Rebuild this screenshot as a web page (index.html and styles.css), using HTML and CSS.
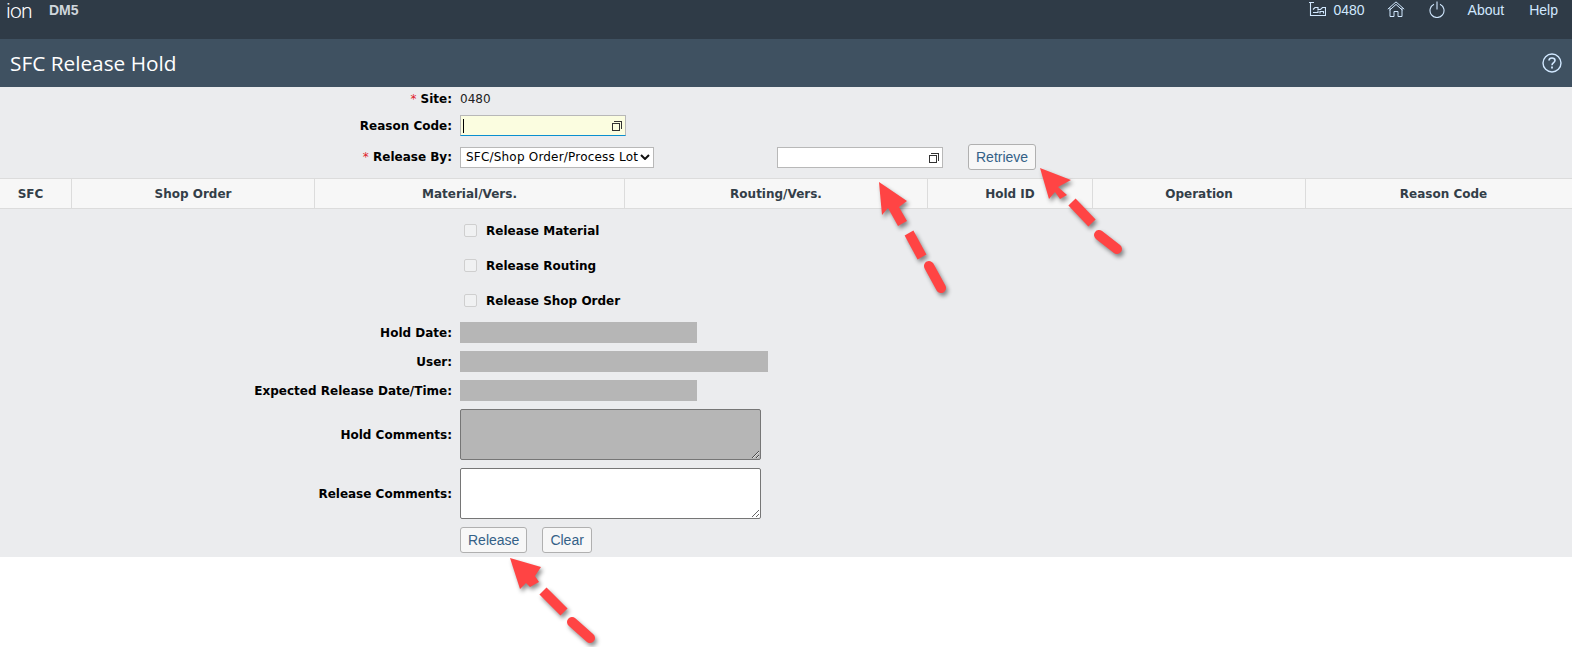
FILE: index.html
```html
<!DOCTYPE html>
<html lang="en">
<head>
    <meta charset="UTF-8">
    <meta name="viewport" content="width=device-width, initial-scale=1.0">
    <title>SFC Release Hold</title>
    <link rel="stylesheet" href="styles.css">
</head>
<body>
    <header class="shell">
        <span class="shell-logo">ion</span>
        <span class="shell-system">DM5</span>
        <nav class="shell-nav">
            <span class="shell-site">
                <svg class="ico-factory" width="17" height="14" viewBox="0 0 17 14" fill="none" stroke="currentColor" stroke-width="1.1">
                    <path d="M0 0.5H5M1.5 0.5V13.5H16.5V5.5H13.5L11.5 7.5H9V5.5H6L4 7.5"/>
                    <path d="M4 10.5H9V8.5M11 11.5V9.5H14.5V11.5"/>
                </svg>
                0480
            </span>
            <svg class="ico-home" width="18" height="16" viewBox="0 0 18 16" fill="none" stroke="currentColor" stroke-width="1">
                <path d="M0.8 8.2L9 0.9L17.2 8.2M3 6.8V15.5H7V10.5H11V15.5H15V6.8"/>
                <path d="M2.6 9.2L9 3.4L15.4 9.2"/>
            </svg>
            <svg class="ico-power" width="16" height="17" viewBox="0 0 16 17" fill="none" stroke="currentColor" stroke-width="1.1">
                <path d="M8 0.5V8.5M5 3.2A7 7 0 1 0 11 3.2"/>
            </svg>
            <span class="shell-link shell-about">About</span>
            <span class="shell-link">Help</span>
        </nav>
    </header>

    <div class="title-bar">
        <h1>SFC Release Hold</h1>
        <svg class="ico-help" width="20" height="20" viewBox="0 0 20 20" fill="none" stroke="currentColor" stroke-width="1.4">
            <circle cx="10" cy="10" r="9"/>
            <path d="M7 7.6C7 5.8 8.4 5 10 5C11.7 5 13 6 13 7.5C13 9.6 10 9.6 10 12.2" stroke-width="1.6"/>
            <path d="M10 13.6V15.4" stroke-width="1.8"/>
        </svg>
    </div>

    <main class="content">
        <div class="row row-site">
            <label class="lbl"><span class="req">*</span> Site:</label>
            <span class="value">0480</span>
        </div>
        <div class="row row-reason">
            <label class="lbl">Reason Code:</label>
            <span class="browse-field browse-focus">
                <input type="text" class="browse-input">
                <span class="caret"></span>
                <span class="browse-ico"></span>
            </span>
        </div>
        <div class="row row-release">
            <label class="lbl"><span class="req">*</span> Release By:</label>
            <select class="release-select">
                <option>SFC/Shop Order/Process Lot</option>
            </select>
            <span class="browse-field">
                <input type="text" class="browse-input">
                <span class="browse-ico"></span>
            </span>
            <button type="button" class="btn btn-retrieve">Retrieve</button>
        </div>

        <table class="holds">
            <thead>
                <tr>
                    <th class="c-sfc">SFC</th>
                    <th class="c-order">Shop Order</th>
                    <th class="c-material">Material/Vers.</th>
                    <th class="c-routing">Routing/Vers.</th>
                    <th class="c-hold">Hold ID</th>
                    <th class="c-oper">Operation</th>
                    <th class="c-reason">Reason Code</th>
                </tr>
            </thead>
        </table>

        <div class="checks">
            <div class="check-row"><input type="checkbox" class="chk" disabled><span>Release Material</span></div>
            <div class="check-row"><input type="checkbox" class="chk" disabled><span>Release Routing</span></div>
            <div class="check-row"><input type="checkbox" class="chk" disabled><span>Release Shop Order</span></div>
        </div>

        <div class="row row-info row-first">
            <label class="lbl">Hold Date:</label>
            <span class="grey-field"></span>
        </div>
        <div class="row row-info">
            <label class="lbl">User:</label>
            <span class="grey-field grey-wide"></span>
        </div>
        <div class="row row-info">
            <label class="lbl">Expected Release Date/Time:</label>
            <span class="grey-field"></span>
        </div>
        <div class="row row-hold-comments">
            <label class="lbl">Hold Comments:</label>
            <textarea class="comments comments-off" disabled></textarea>
        </div>
        <div class="row row-release-comments">
            <label class="lbl">Release Comments:</label>
            <textarea class="comments"></textarea>
        </div>
        <div class="actions">
            <button type="button" class="btn">Release</button>
            <button type="button" class="btn">Clear</button>
        </div>
    </main>

    <svg class="arrows" width="1572" height="647" viewBox="0 0 1572 647">
        <g class="arrow">
            <path d="M879 182L907 201L899 207L907 221L898 226L888 208L882 215Z"/>
            <path class="dash" d="M909 233L922 257"/>
            <path class="dash dash-end" d="M929 266L941 288"/>
        </g>
        <g class="arrow">
            <path d="M1040 168L1071 180L1058 187L1067 195L1060 199L1055 192L1049 199Z"/>
            <path class="dash" d="M1072 202L1092 223"/>
            <path class="dash dash-end" d="M1099 235L1117 249"/>
        </g>
        <g class="arrow">
            <path d="M510 558L541 567L535 576L539 582L530 587L526 583L520 589Z"/>
            <path class="dash" d="M543 591L564 612"/>
            <path class="dash dash-end" d="M572 622L590 638"/>
        </g>
    </svg>
</body>
</html>
```

FILE: styles.css
```css
body {
    font-family: "DejaVu Sans", Verdana, sans-serif;
    font-size: 12px;
    margin: 0;
    padding: 0;
    background-color: #fff;
    color: #000;
    position: relative;
    height: 647px;
    overflow: hidden;
}

/* top shell */
.shell {
    display: flex;
    align-items: flex-start;
    height: 39px;
    background-color: #2f3b47;
    color: #d1e8ff;
    font-family: "Liberation Sans", Arial, sans-serif;
    font-size: 14px;
    overflow: hidden;
}
.shell-logo {
    box-sizing: border-box;
    width: 49px;
    padding-left: 6px;
    font-family: Roboto, sans-serif;
    font-size: 21px;
    font-weight: 300;
    letter-spacing: -0.8px;
    line-height: 22px;
    color: #fff;
}
.shell-system {
    font-weight: bold;
    font-size: 14px;
    line-height: 18px;
    padding-top: 1px;
    color: #cfd6dc;
}
.shell-nav {
    display: flex;
    align-items: flex-start;
    margin-left: auto;
    padding: 1px 14px 0 0;
    line-height: 18px;
}
.shell-site {
    display: flex;
    align-items: flex-start;
    gap: 7px;
    margin-right: 22px;
}
.ico-factory {
    margin-top: 1px;
}
.ico-home {
    margin: 0 24px 0 0;
}
.ico-power {
    margin: 0 23px 0 0;
}
.shell-about {
    margin-right: 25px;
}

/* page title */
.title-bar {
    display: flex;
    align-items: center;
    justify-content: space-between;
    height: 48px;
    padding: 0 10px;
    background-color: #3f5161;
    color: #fff;
}
.title-bar h1 {
    margin: 0;
    font-family: "Open Sans", sans-serif;
    font-size: 20.8px;
    font-weight: 400;
}
.ico-help {
    color: #d1e8ff;
}

/* form */
.content {
    background-color: #ebecee;
    padding-bottom: 4px;
}
.row {
    display: flex;
    align-items: center;
}
.lbl {
    width: 452px;
    margin-right: 8px;
    text-align: right;
    font-weight: bold;
    flex-shrink: 0;
}
.req {
    color: #e0202a;
    font-weight: normal;
}
.value {
    color: #222;
}
.row-site {
    height: 20px;
    padding-top: 2px;
}
.row-reason {
    margin-top: 6px;
}
.row-release {
    margin-top: 8px;
    margin-bottom: 8px;
    height: 26px;
}
.browse-field {
    position: relative;
    display: block;
    width: 166px;
    height: 21px;
}
.browse-input {
    display: block;
    box-sizing: border-box;
    width: 100%;
    height: 100%;
    margin: 0;
    padding: 0 24px 0 4px;
    border: 1px solid #b8b8b8;
    background-color: #fff;
    outline: none;
}
.browse-focus .browse-input {
    background-color: #fbfde0;
    border-bottom-color: #0a8fd0;
}
.caret {
    position: absolute;
    left: 3px;
    top: 4px;
    width: 1px;
    height: 14px;
    background-color: #000;
}
.browse-ico {
    position: absolute;
    right: 6px;
    top: 8px;
    width: 6px;
    height: 6px;
    border: 1px solid #333;
}
.browse-ico::before {
    content: "";
    position: absolute;
    left: 1px;
    top: -3px;
    width: 7px;
    height: 7px;
    border-top: 1px solid #333;
    border-right: 1px solid #333;
}
.release-select {
    appearance: none;
    box-sizing: border-box;
    width: 194px;
    height: 21px;
    margin: 0 123px 0 0;
    padding: 0 0 0 5px;
    border: 1px solid #b8b8b8;
    background: #fff url("data:image/svg+xml,%3Csvg xmlns='http://www.w3.org/2000/svg' width='10' height='6'%3E%3Cpath d='M1 1L5 5L9 1' fill='none' stroke='%23111' stroke-width='2'/%3E%3C/svg%3E") no-repeat right 3px center;
    font-family: "DejaVu Sans", Verdana, sans-serif;
    font-size: 12px;
    letter-spacing: 0.2px;
    color: #000;
}
.btn {
    box-sizing: border-box;
    height: 26px;
    padding: 0 7px;
    border: 1px solid #b0b0b0;
    border-radius: 3px;
    background-color: #f7f7f7;
    color: #346187;
    font-family: "Liberation Sans", Arial, sans-serif;
    font-size: 14px;
}
.btn-retrieve {
    margin-left: 25px;
}

/* table head */
.holds {
    width: 100%;
    table-layout: fixed;
    border-collapse: separate;
    border-spacing: 0;
}
.holds th {
    box-sizing: border-box;
    height: 31px;
    padding: 0;
    background-color: #f7f7f7;
    border-top: 1px solid #dcdcdc;
    border-bottom: 1px solid #dcdcdc;
    border-right: 1px solid #dcdcdc;
    color: #333e48;
    font-size: 12px;
    text-align: center;
}
.holds th:last-child {
    border-right: 0;
}
.holds .c-sfc { width: 72px; padding-right: 10px; }
.c-order { width: 243px; }
.c-material { width: 310px; }
.c-routing { width: 303px; }
.c-hold { width: 165px; }
.c-oper { width: 213px; }
.holds .c-reason { padding-left: 9px; }

/* checkboxes */
.checks {
    padding-top: 4px;
}
.check-row {
    display: flex;
    align-items: center;
    height: 35px;
    padding-left: 464px;
    font-weight: bold;
}
.chk {
    appearance: none;
    box-sizing: border-box;
    width: 13px;
    height: 13px;
    margin: 0 9px 0 0;
    border: 1px solid #cfcfcf;
    border-radius: 2px;
    background-color: #f0f1f2;
}

/* read only fields */
.row-info {
    margin-top: 8px;
}
.row-first {
    margin-top: 4px;
}
.grey-field {
    display: block;
    width: 237px;
    height: 21px;
    background-color: #b6b6b6;
}
.grey-wide {
    width: 308px;
}
.comments {
    display: block;
    box-sizing: border-box;
    width: 301px;
    height: 51px;
    margin: 0;
    border: 1px solid #767676;
    border-radius: 2px;
    background-color: #fff;
}
.comments-off {
    background-color: #b6b6b6;
}
.row-hold-comments {
    margin-top: 8px;
}
.row-release-comments {
    margin-top: 8px;
}
.actions {
    display: flex;
    gap: 15px;
    margin-top: 8px;
    padding-left: 460px;
}

/* screenshot annotation arrows */
.arrows {
    position: absolute;
    left: 0;
    top: 0;
    pointer-events: none;
}
.arrow {
    fill: #ff4444;
    filter: drop-shadow(2px 3px 2px rgba(0, 0, 0, 0.45));
}
.dash {
    fill: none;
    stroke: #ff4444;
    stroke-width: 10;
}
.dash-end {
    stroke-linecap: round;
}
```
